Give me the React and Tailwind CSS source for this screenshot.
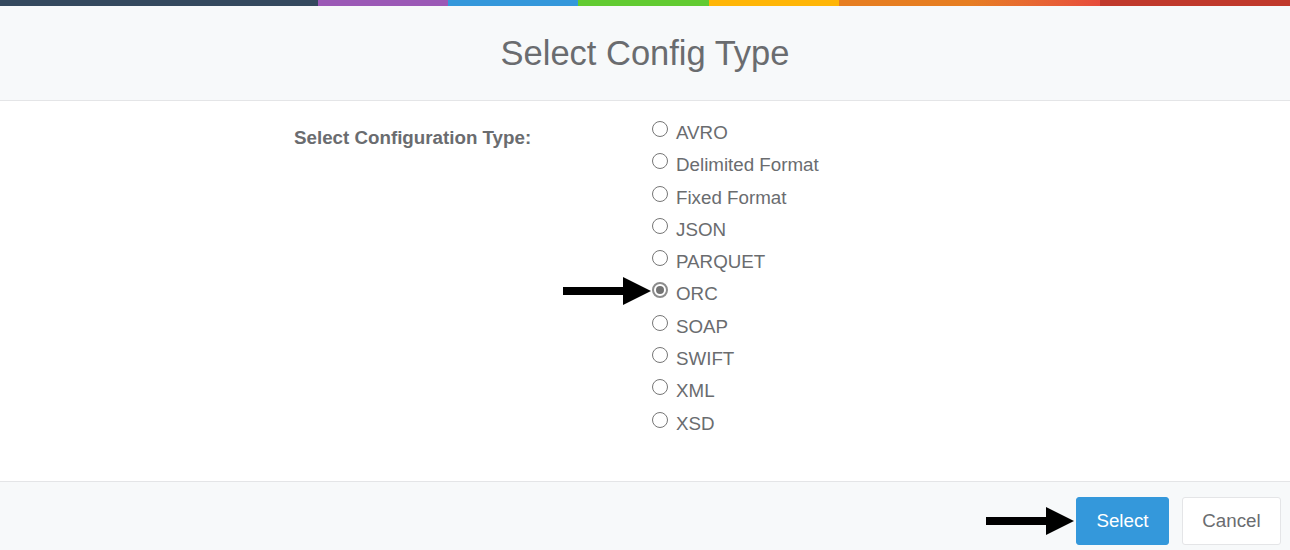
import { useState } from 'react';

const types = ['AVRO', 'Delimited Format', 'Fixed Format', 'JSON', 'PARQUET', 'ORC', 'SOAP', 'SWIFT', 'XML', 'XSD'];

function Arrow({ className }) {
  return (
    <svg className={className} width="88" height="28" viewBox="0 0 88 28">
      <rect x="0" y="10" width="62" height="8" fill="#000" />
      <polygon points="60,0 88,14 60,28" fill="#000" />
    </svg>
  );
}

function Radio({ checked }) {
  return checked ? (
    <span className="mt-[4px] w-4 h-4 shrink-0 rounded-full border-2 border-[#8c8c8c] bg-white flex items-center justify-center">
      <span className="w-2 h-2 rounded-full bg-[#737373]" />
    </span>
  ) : (
    <span className="mt-[4px] w-4 h-4 shrink-0 rounded-full border border-[#767676] bg-white" />
  );
}

export default function App() {
  const [selected, setSelected] = useState('ORC');

  return (
    <div className="relative h-[550px] overflow-hidden bg-white text-[#6a6c6f]" style={{ fontFamily: '"Liberation Sans", Arial, sans-serif' }}>
      {/* color strip */}
      <div className="flex h-[6px]">
        <div className="w-[318px] bg-[#34495e]" />
        <div className="w-[130px] bg-[#9b59b6]" />
        <div className="w-[130px] bg-[#3498db]" />
        <div className="w-[131px] bg-[#62cb31]" />
        <div className="w-[130px] bg-[#ffb606]" />
        <div className="w-[261px] bg-gradient-to-r from-[#e67e22] from-50% to-[#e74c3c]" />
        <div className="flex-1 bg-[#c0392b]" />
      </div>

      <div className="h-[95px] flex items-center justify-center bg-[#f7f9fa] border-b border-[#e4e5e7]">
        <h4 className="text-[34.5px] font-normal leading-none">Select Config Type</h4>
      </div>

      <div className="flex pt-[16px] h-[380px]">
        <div className="w-[652px] pl-[294px] pt-[5px]">
          <label className="block text-[18.75px] font-bold leading-[32px]">Select Configuration Type:</label>
        </div>
        <div className="flex flex-col">
          {types.map(t => (
            <label key={t} onClick={() => setSelected(t)} className="relative flex items-start gap-2 h-[32.3px] cursor-pointer">
              <Radio checked={selected === t} />
              <span className="text-[18.75px] leading-[32.3px]">{t}</span>
              {t === 'ORC' && <Arrow className="absolute right-full top-[-1px] mr-[1px]" />}
            </label>
          ))}
        </div>
      </div>

      <div className="flex justify-end gap-[13px] pt-[15px] pr-[9px] bg-[#f7f9fa] border-t border-[#e4e5e7] h-[70px]">
        <div className="relative">
          <Arrow className="absolute right-full top-[10px] mr-[2px]" />
          <button className="w-[93px] h-[48px] rounded-[3px] bg-[#3498db] border border-[#3498db] text-white text-[18.75px]">Select</button>
        </div>
        <button className="w-[99px] h-[48px] rounded-[3px] bg-white border border-[#e4e5e7] text-[18.75px]">Cancel</button>
      </div>
    </div>
  );
}
